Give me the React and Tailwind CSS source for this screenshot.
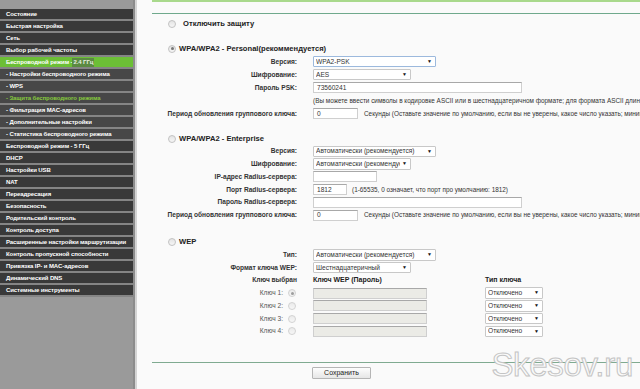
const MENU = [
  { label: 'Состояние' },
  { label: 'Быстрая настройка' },
  { label: 'Сеть' },
  { label: 'Выбор рабочей частоты' },
  { label: 'Беспроводной режим - ', extra: '2.4 ГГц', active: true },
  { label: '- Настройки беспроводного режима', sub: true },
  { label: '- WPS', sub: true },
  { label: '- Защита беспроводного режима', sub: true, current: true },
  { label: '- Фильтрация MAC-адресов', sub: true },
  { label: '- Дополнительные настройки', sub: true },
  { label: '- Статистика беспроводного режима', sub: true },
  { label: 'Беспроводной режим - 5 ГГц' },
  { label: 'DHCP' },
  { label: 'Настройки USB' },
  { label: 'NAT' },
  { label: 'Переадресация' },
  { label: 'Безопасность' },
  { label: 'Родительский контроль' },
  { label: 'Контроль доступа' },
  { label: 'Расширенные настройки маршрутизации' },
  { label: 'Контроль пропускной способности' },
  { label: 'Привязка IP- и MAC-адресов' },
  { label: 'Динамический DNS' },
  { label: 'Системные инструменты' }
]

const PERIOD_NOTE = 'Секунды (Оставьте значение по умолчанию, если вы не уверены, какое число указать; минимальное'

export default function App() {
  return (
    <div className="flex w-[640px] h-[389px] overflow-hidden font-['Liberation_Sans',Arial,sans-serif] bg-[#fafafa]">
      {/* Sidebar */}
      <div className="w-[133px] shrink-0 bg-[#9a9a9a] pt-[9px]">
        {MENU.map(m => (
          <div key={m.label}
            className={`h-[12px] border-b-2 border-[#858585] pl-[6px] flex items-center text-[6px] tracking-[-0.1px] font-bold whitespace-nowrap overflow-hidden ${m.active ? 'bg-[#6cbf36] text-white' : m.sub ? 'bg-[#474747]' : 'bg-[#393939]'} ${m.current ? 'text-[#86c93d]' : 'text-white'}`}>
            {m.label}
            {m.extra && <span className="bg-[#5b8a42] text-[#e8f0e0] px-[1px]">{m.extra}</span>}
          </div>
        ))}
      </div>
      <div className="w-[2px] shrink-0 bg-[#8c8c8c]" />
      <div className="w-[2px] shrink-0 bg-[#d4d4d4]" />

      {/* Main */}
      <div className="relative flex-1 pl-[15px] text-[#333] overflow-hidden">
        <div className="h-[2px] bg-[#a9d98c]" />
        <div className="h-px mt-[11px] bg-[#6fa98c]" />

        <Title className="mt-[3px]" label="Отключить защиту" wide />

        <Title className="mt-[12px]" label="WPA/WPA2 - Personal(рекомменду­ется)" checked />
        <Row label="Версия:"><Select w="w-[123px]" value="WPA2-PSK" focus /></Row>
        <Row label="Шифрование:"><Select w="w-[98px]" value="AES" /></Row>
        <Row label="Пароль PSK:"><Input w="w-[209px]" value="73560241" /></Row>
        <Row label="">
          <span className="whitespace-nowrap text-[6.4px]">(Вы можете ввести символы в кодировке ASCII или в шестнадцатеричном формате; для формата ASCII длина ключа</span>
        </Row>
        <Row label="Период обновления группового ключа:">
          <Input w="w-[45px]" value="0" />
          <span className="ml-[6px] whitespace-nowrap text-[6.4px]">{PERIOD_NOTE}</span>
        </Row>

        <Title className="mt-[12px]" label="WPA/WPA2 - Enterprise" />
        <Row label="Версия:" tight><Select w="w-[123px]" value="Автоматически (рекомендуется)" /></Row>
        <Row label="Шифрование:" tight><Select w="w-[98px]" value="Автоматически (рекомендует" /></Row>
        <Row label="IP-адрес Radius-сервера:" tight><Input w="w-[64px]" value="" /></Row>
        <Row label="Порт Radius-сервера:" tight>
          <Input w="w-[34px]" value="1812" />
          <span className="ml-[5px] whitespace-nowrap text-[6.4px]">(1-65535, 0 означает, что порт про умолчанию: 1812)</span>
        </Row>
        <Row label="Пароль Radius-сервера:" tight><Input w="w-[209px]" value="" /></Row>
        <Row label="Период обновления группового ключа:" tight>
          <Input w="w-[45px]" value="0" />
          <span className="ml-[6px] whitespace-nowrap text-[6.4px]">{PERIOD_NOTE}</span>
        </Row>

        <Title className="mt-[14px]" label="WEP" />
        <Row label="Тип:" tight><Select w="w-[123px]" value="Автоматически (рекомендуется)" /></Row>
        <Row label="Формат ключа WEP:" tight><Select w="w-[98px]" value="Шестнадцатеричный" /></Row>
        <Row label="Ключ выбран" tight>
          <span className="w-[172px] font-bold text-[7px] text-[#222]">Ключ WEP (Пароль)</span>
          <span className="font-bold text-[7px] text-[#222]">Тип ключа</span>
        </Row>
        {[1, 2, 3, 4].map(n => (
          <KeyRow key={n} n={n} checked={n === 1} />
        ))}

        <div className="h-px mt-[24px] bg-[#7faa90]" />
        <div className="flex mt-[4px] pl-[160px]">
          <div className="w-[59px] h-[12px] border border-[#b5b5b5] rounded-[1px] bg-gradient-to-b from-[#fdfdfd] to-[#e6e6e6] flex items-center justify-center text-[7px] text-[#222]">
            Сохранить
          </div>
        </div>

        {/* Watermark */}
        <div className="absolute right-[7px] bottom-[8px] text-[33px] leading-none text-[#fafafa] [-webkit-text-stroke:1px_#c4c4c4] tracking-[-0.3px]">
          Skesov.ru
        </div>
      </div>
    </div>
  )
}

function Radio({ checked }) {
  return (
    <span className="w-[8px] h-[8px] rounded-full border border-[#c2c2c2] bg-gradient-to-b from-[#e4e4e4] to-[#f6f6f6] flex items-center justify-center shrink-0">
      {checked && <span className="w-[3px] h-[3px] rounded-full bg-[#777]" />}
    </span>
  )
}

function Title({ label, checked, wide, className }) {
  return (
    <div className={`flex items-center h-[13px] pl-[16px] ${className}`}>
      <Radio checked={checked} />
      <span className={`${wide ? 'ml-[7px]' : 'ml-[3px]'} font-bold text-[7.6px] text-[#222] whitespace-nowrap`}>{label}</span>
    </div>
  )
}

function Row({ label, tight, children }) {
  return (
    <div className={`flex items-center ${tight ? 'h-[12.75px]' : 'h-[13px]'}`}>
      <div className="w-[145px] shrink-0 text-right font-bold text-[6.6px] whitespace-nowrap text-[#333]">{label}</div>
      <div className="flex items-center pl-[16px] whitespace-nowrap">{children}</div>
    </div>
  )
}

function Select({ w, value, focus }) {
  return (
    <div className={`${w} h-[11.5px] bg-white border rounded-[1px] flex items-center pl-[2px] pr-[3px] text-[6.6px] text-[#333] ${focus ? 'border-[#9cb9dd]' : 'border-[#c8c8c8]'}`}>
      <span className="flex-1 min-w-0 overflow-hidden whitespace-nowrap">{value}</span>
      <span className="ml-[2px] text-[5px] text-[#111]">▼</span>
    </div>
  )
}

function Input({ w, value, disabled }) {
  return (
    <div className={`${w} h-[11px] border border-[#cfcfcf] border-t-[#a8a8a8] flex items-center pl-[3px] text-[6.6px] text-[#333] ${disabled ? 'bg-[#ebebe6]' : 'bg-white'}`}>
      {value}
    </div>
  )
}

function KeyRow({ n, checked }) {
  return (
    <div className="flex items-center h-[12.75px]">
      <div className="w-[145px] shrink-0 flex items-center justify-end text-[6.6px] text-[#555]">
        <span className="mr-[5px]">Ключ {n}:</span>
        <span className="opacity-70 mr-[1px]"><Radio checked={checked} /></span>
      </div>
      <div className="flex items-center pl-[16px]">
        <Input w="w-[114px]" value="" disabled />
        <div className="ml-[58px]"><Select w="w-[58px]" value="Отключено" /></div>
      </div>
    </div>
  )
}
